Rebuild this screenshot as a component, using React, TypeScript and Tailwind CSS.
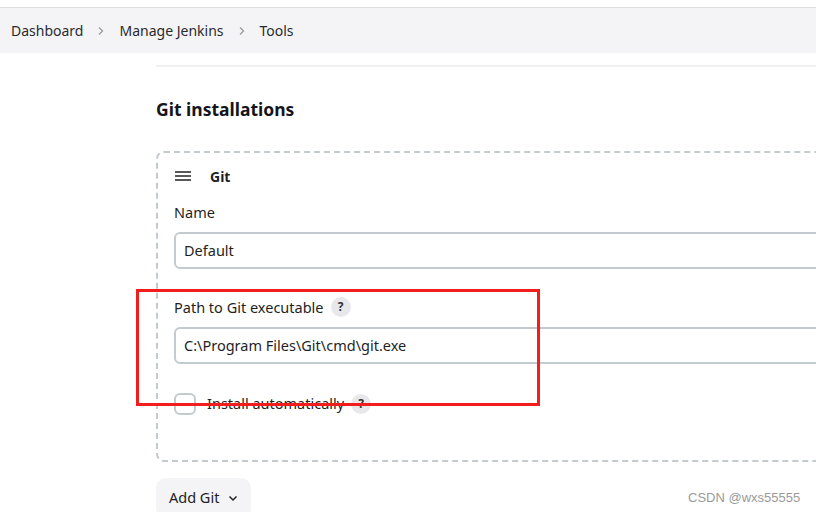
import React from 'react';

function HelpBadge() {
  return (
    <span className="ml-[7px] inline-flex h-[20px] w-[20px] shrink-0 items-center justify-center rounded-full bg-[#e8e8ea] text-[12px] font-bold leading-none text-[#333]">
      ?
    </span>
  );
}

function Chevron() {
  return (
    <svg width="10" height="10" viewBox="0 0 10 10" className="mx-[13px]" fill="none" stroke="#9a9aa0" strokeWidth="1.3">
      <path d="M3 1.5 6.5 5 3 8.5" />
    </svg>
  );
}

export default function App() {
  return (
    <div className="relative h-[512px] w-[816px] overflow-hidden bg-white text-[#1f1f24] font-['Noto_Sans',sans-serif]">
      <div className="h-[8px] border-b border-[#dedee0]" />
      <div className="flex h-[45px] items-center bg-[#f4f4f6] pl-[11px] text-[14px] text-[#2a2a2e]">
        <span>Dashboard</span>
        <Chevron />
        <span>Manage Jenkins</span>
        <Chevron />
        <span>Tools</span>
      </div>

      <div className="pl-[156px]">
        <div className="mt-[12px] h-[2px] bg-[#f1f0f5]" />
        <h2 className="mt-[30px] text-[17.5px] font-bold leading-[24px] text-[#14141a]">Git installations</h2>

        <div className="mt-[30px] w-[700px] rounded-[8px] border-2 border-dashed border-[#c4cbce] pl-[16px] pb-[45px]">
          <div className="mt-[13px] flex h-[20px] items-center">
            <svg width="16" height="12" viewBox="0 0 16 12" className="ml-[1px]" stroke="#222" strokeWidth="1.6">
              <path d="M0 2h16M0 6h16M0 10h16" />
            </svg>
            <span className="ml-[19px] text-[14px] font-bold">Git</span>
          </div>

          <div className="mt-[15px] text-[14.5px] leading-[22px]">Name</div>
          <div className="mt-[9px] flex h-[37px] items-center rounded-[6px] border-2 border-[#c4cbce] pl-[8px] text-[14.5px]">
            Default
          </div>

          <div className="mt-[27px] flex items-center text-[14.5px] leading-[22px]">
            Path to Git executable
            <HelpBadge />
          </div>
          <div className="mt-[9px] flex h-[37px] items-center rounded-[6px] border-2 border-[#c4cbce] pl-[8px] text-[14.5px]">
            C:\Program Files\Git\cmd\git.exe
          </div>

          <div className="mt-[29px] flex h-[22px] items-center text-[14.5px]">
            <span className="block h-[22px] w-[22px] shrink-0 rounded-[6px] border-2 border-[#c4cbce]" />
            <span className="ml-[11px]">Install automatically</span>
            <HelpBadge />
          </div>
        </div>

        <button className="mt-[16px] flex h-[40px] items-center rounded-[10px] bg-[#f4f4f6] px-[13px] text-[14.5px] text-[#222]">
          Add Git
          <svg width="10" height="8" viewBox="0 0 10 8" className="ml-[9px]" fill="none" stroke="#222" strokeWidth="1.5">
            <path d="M1.5 2.5 5 6 8.5 2.5" />
          </svg>
        </button>
      </div>

      <div className="absolute left-[136px] top-[289px] h-[117px] w-[404px] border-[3px] border-[#f21d1d]" />

      <div className="absolute left-[688px] top-[488px] text-[13px] text-[#9a9a9a] font-['Liberation_Sans',sans-serif]">
        CSDN @wxs55555
      </div>
    </div>
  );
}
